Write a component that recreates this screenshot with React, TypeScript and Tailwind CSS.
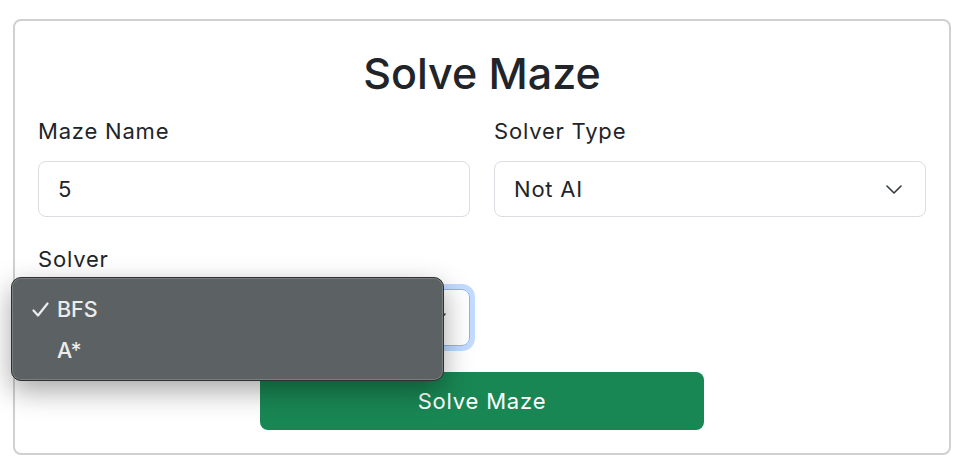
import React, { useState } from 'react';

function Chevron({ className }: { className?: string }) {
    return (
        <svg className={className} width="16" height="9" viewBox="0 0 16 9" fill="none">
            <path d="M1 1l7 7 7-7" stroke="#343a40" strokeWidth="1.6" strokeLinecap="round" strokeLinejoin="round" />
        </svg>
    );
}

function Check() {
    return (
        <svg width="17" height="15" viewBox="0 0 17 15" fill="none">
            <path d="M1.5 8.5l4.5 5L15.5 1.5" stroke="#ececec" strokeWidth="2.2" strokeLinecap="round" strokeLinejoin="round" />
        </svg>
    );
}

export default function App() {
    const [mazeName, setMazeName] = useState('5');
    const solverTypes = ['Not AI', 'AI'];
    const solvers = ['BFS', 'A*'];

    return (
        <div className="min-h-[472px] bg-white pt-[19px] pl-[13px] font-['Inter','Liberation_Sans',sans-serif] text-[#212529]">
            <div className="w-[938px] rounded-[8px] border-2 border-[#d0d0d0] px-[23px] pt-[25px] pb-[23px]">
                <h2 className="mb-[15px] text-center text-[43px] leading-[54px] font-medium">Solve Maze</h2>

                <div className="grid grid-cols-2 gap-x-[24px] text-[22px] tracking-[0.8px]">
                    <div>
                        <label className="mb-[14px] block leading-[32px]">Maze Name</label>
                        <input
                            value={mazeName}
                            onChange={(e) => setMazeName(e.target.value)}
                            className="h-[56px] w-full rounded-[8px] border-[1.5px] border-[#dadde1] px-[19px] outline-none"
                        />
                    </div>
                    <div>
                        <label className="mb-[14px] block leading-[32px]">Solver Type</label>
                        <div className="flex h-[56px] items-center justify-between rounded-[8px] border-[1.5px] border-[#dadde1] pr-[23px] pl-[19px]">
                            <span>{solverTypes[0]}</span>
                            <Chevron />
                        </div>
                    </div>
                </div>

                <div className="mt-[26px] w-[432px] text-[22px] tracking-[0.8px]">
                    <label className="mb-[14px] block leading-[32px]">Solver</label>
                    <div className="relative">
                        <div className="flex h-[57px] items-center justify-between rounded-[8px] border-[1.5px] border-[#86b7fe] pr-[23px] pl-[19px] shadow-[0_0_0_5px_rgba(13,110,253,0.25)]">
                            <span className="invisible">{solvers[0]}</span>
                            <Chevron />
                        </div>

                        {/* open native select list */}
                        <div className="absolute top-[-12px] left-[-27px] z-10 h-[104px] w-[433px] rounded-[10px] border border-[#2e3131] bg-[#5c6263] pt-[11px] pl-[20px] text-[21.5px] tracking-normal text-[#ececec] shadow-[inset_0_0_0_1px_rgba(255,255,255,0.18),0_10px_28px_rgba(0,0,0,0.35)]">
                            {solvers.map((s, i) => (
                                <div key={s} className="flex h-[41px] items-center gap-[8px] leading-[41px] font-medium">
                                    <span className="flex w-[17px] justify-center">{i === 0 && <Check />}</span>
                                    <span>{s}</span>
                                </div>
                            ))}
                        </div>
                    </div>
                </div>

                <div className="mt-[26px] flex justify-center">
                    <button className="h-[58px] w-[444px] rounded-[8px] bg-[#198754] text-[22px] tracking-[0.8px] text-white">
                        Solve Maze
                    </button>
                </div>
            </div>
        </div>
    );
}
